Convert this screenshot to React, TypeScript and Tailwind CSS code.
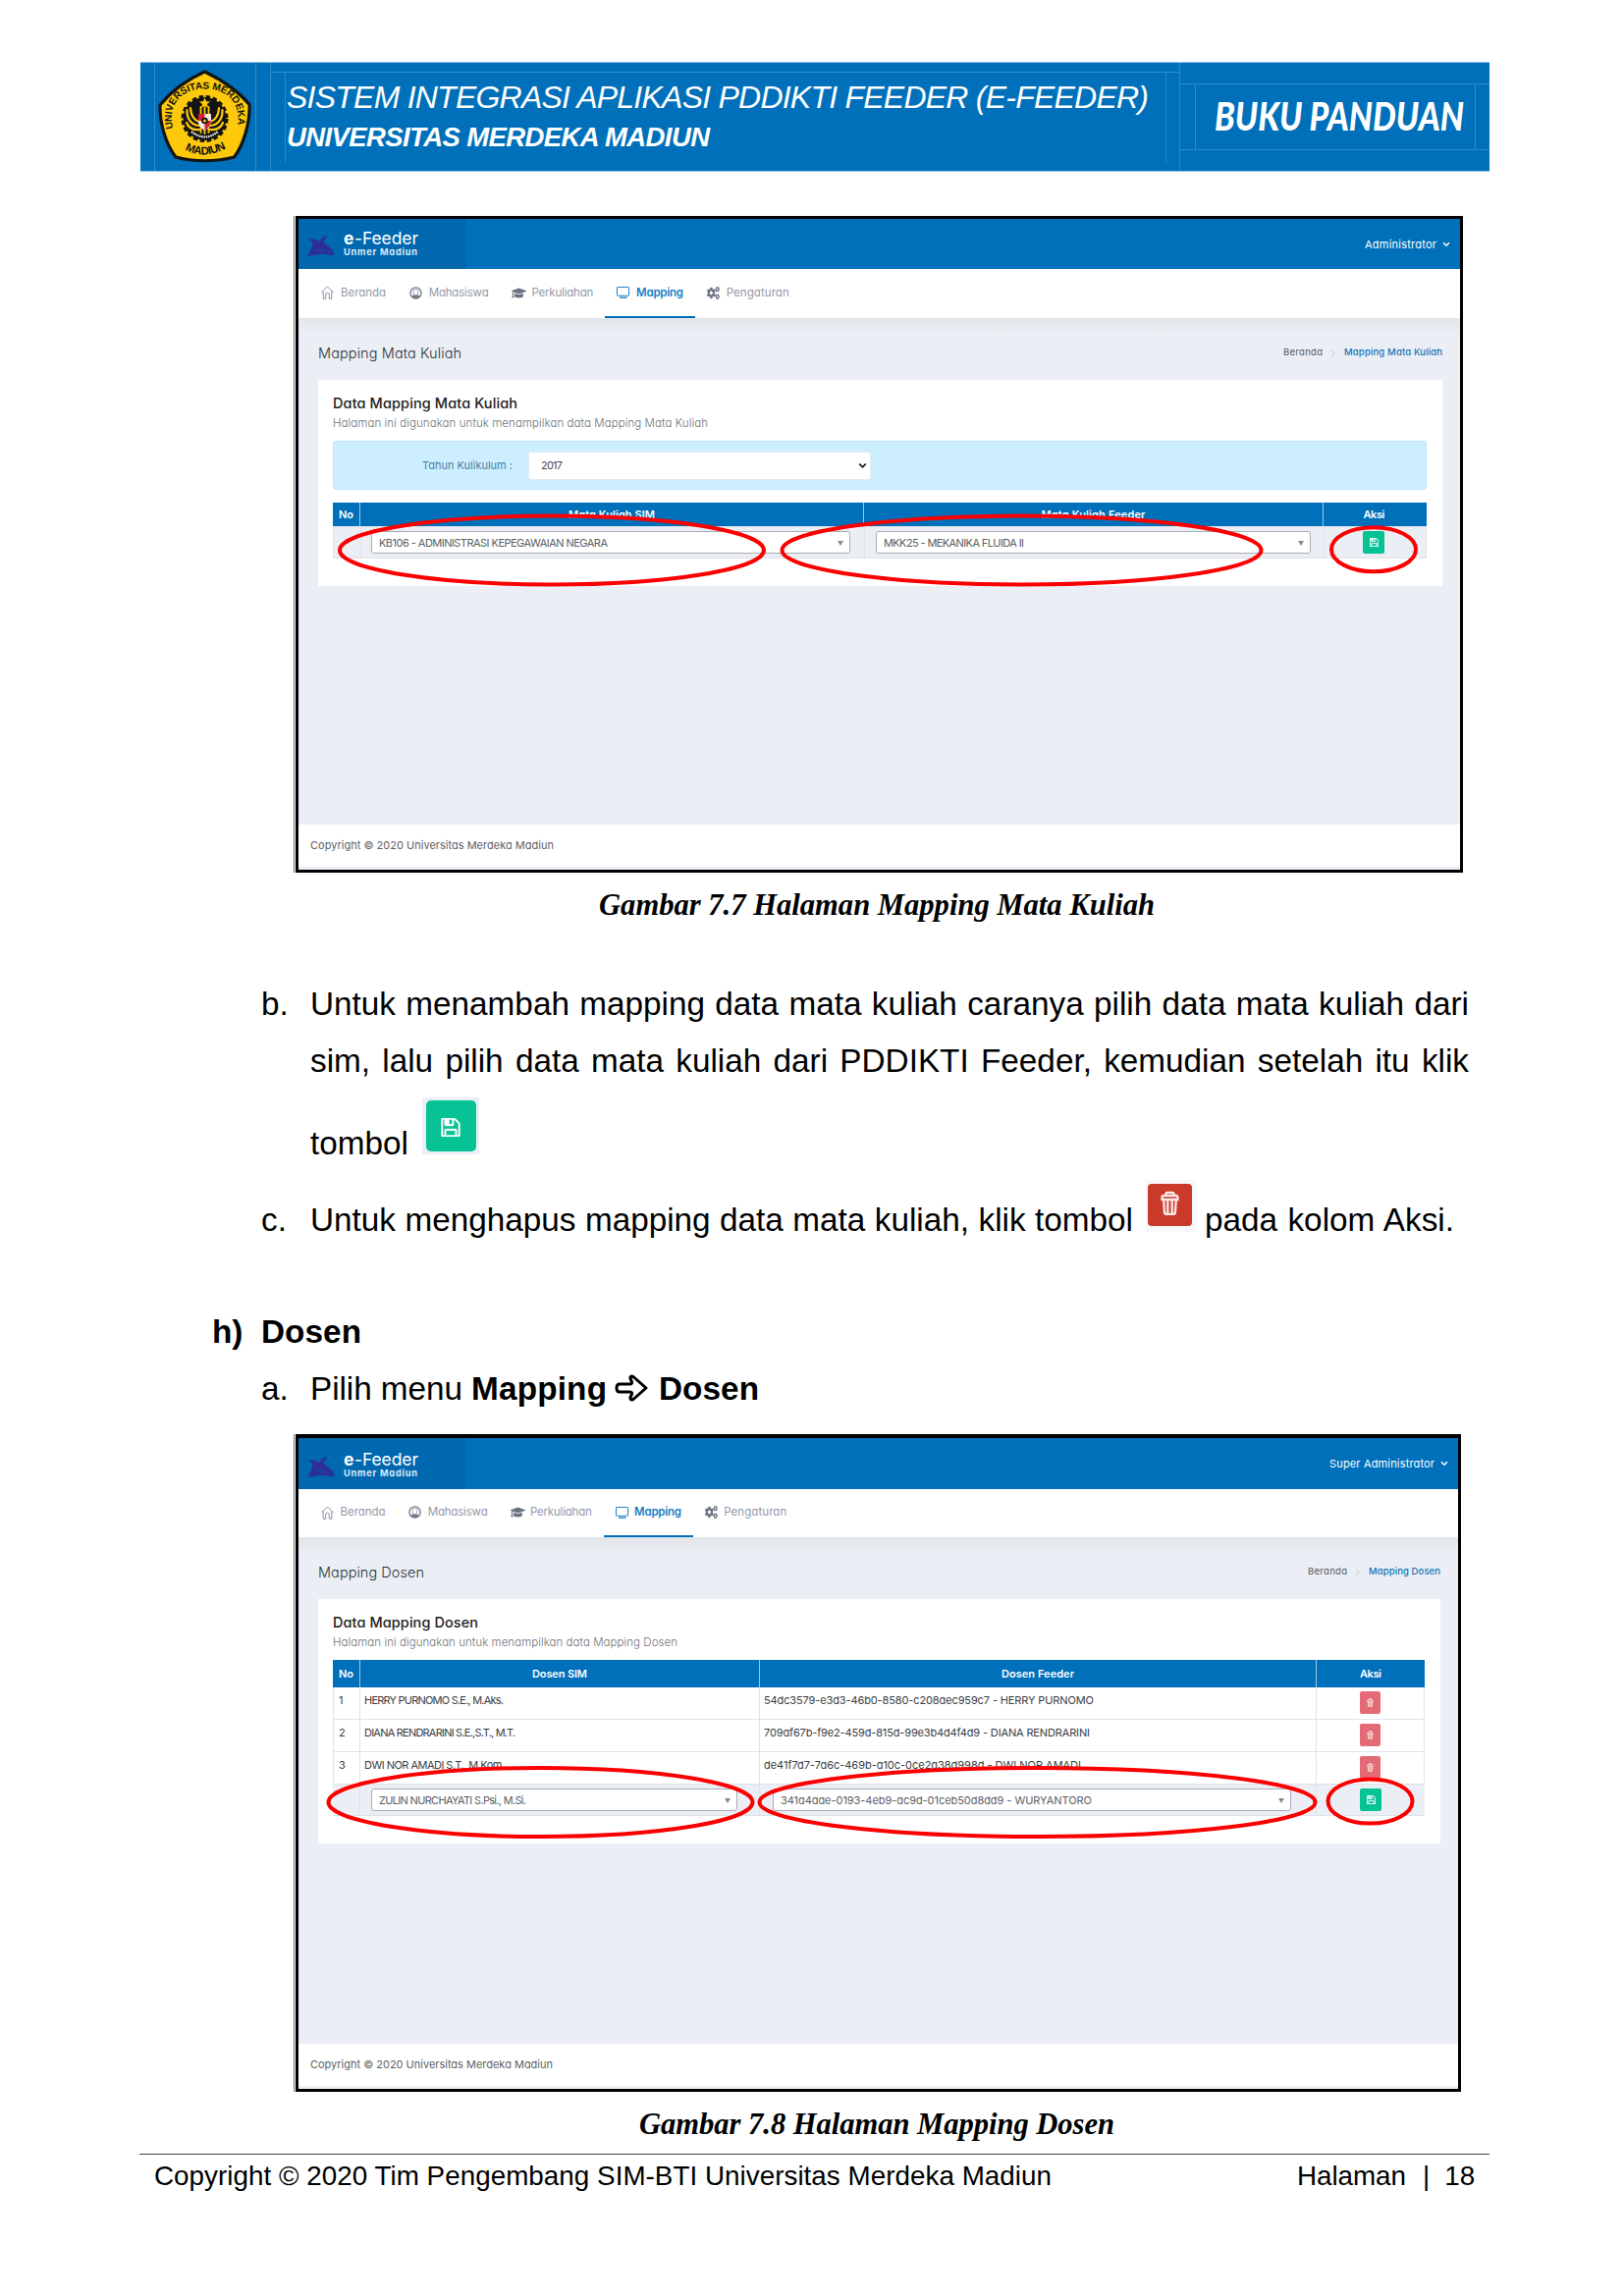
import React, { useLayoutEffect, useRef, useState } from "react";
import { FaCogs, FaGraduationCap } from "react-icons/fa";

type FitMode = "letter" | "word" | "scale";

/* One line of text, spaced out so that it fills exactly `w` pixels. */
function Fit({
  w,
  children,
  className = "",
  mode = "letter",
}: {
  w: number;
  children: string;
  className?: string;
  mode?: FitMode;
}) {
  const ref = useRef<HTMLSpanElement>(null);
  const [style, setStyle] = useState<React.CSSProperties>({});
  useLayoutEffect(() => {
    const natural = ref.current!.getBoundingClientRect().width || w;
    if (mode === "scale") {
      setStyle({ transform: `scaleX(${w / natural})`, transformOrigin: "left" });
    } else if (mode === "word") {
      const spaces = children.split(" ").length - 1;
      setStyle({ wordSpacing: spaces ? (w - natural) / spaces : 0 });
    } else {
      setStyle({ letterSpacing: (w - natural) / Math.max(1, children.length - 1) });
    }
  }, []);
  return (
    <span className={`block shrink-0 whitespace-nowrap ${className}`} style={{ width: w }}>
      <span ref={ref} className="inline-block whitespace-pre" style={style}>
        {children}
      </span>
    </span>
  );
}

function Emblem() {
  return (
    <svg viewBox="0 0 95 95" className="block h-[95px] w-[95px]">
      <defs>
        <path id="arcTopText" d="M15.500 60 C8 33 27 19.500 47.500 19.500 C68 19.500 87 33 80 60" />
        <path id="arcBottomText" d="M26.500 81 Q47 93 71 79" />
      </defs>
      <path
        d="M47.500 2 C62 9 80 20 93 35.500 C94 55 86 78 77.500 89 C60 94 35 94 18 89 C8 76 1.500 55 2 36 C15 20 32 9 47.500 2Z"
        fill="#fdc90a"
        stroke="#141414"
        strokeWidth="3.200"
        strokeLinejoin="round"
      />
      <circle cx="47.500" cy="50" r="22" fill="#141414" />
      <circle cx="47.500" cy="50" r="22.500" fill="none" stroke="#141414" strokeWidth="3" strokeDasharray="4.500 2.600" />
      <path d="M47.500 28.500l1.600 3.800 4 .2-3.100 2.600 1.100 4-3.600-2.300-3.600 2.300 1.100-4-3.100-2.600 4-.2z" fill="#fdc90a" />
      <g stroke="#fdc90a" fill="none" strokeWidth="2.200" strokeLinecap="round">
        <path d="M43 57C35 57 29 51 29.500 41" />
        <path d="M43 53C37 52 33.500 47 33 39" />
        <path d="M52 57C60 57 66 51 65.500 41" />
        <path d="M52 53C58 52 61.500 47 62 39" />
        <path d="M43 61C36 62 31 59 29 54" />
        <path d="M52 61C59 62 64 59 66 54" />
        <path d="M43.500 38v26M47.500 38v27M51.500 38v26" strokeWidth="1.800" />
      </g>
      <path d="M41 45h13v9q-1 5-6.500 8q-5.500-3-6.500-8z" fill="#f2e9e2" />
      <path d="M41 45h6.500v7H41zM47.500 52H54q-.5 6-6.500 10z" fill="#d9232e" />
      <circle cx="47.500" cy="52" r="3.300" fill="#141414" />
      <circle cx="47.500" cy="52" r="1.500" fill="#fdc90a" />
      <path d="M34 63Q47.500 74 61 63" stroke="#f5f5f5" strokeWidth="2.200" fill="none" strokeDasharray="1.500 .8" />
      <text className="font-['Liberation_Sans'] font-bold" fontSize="10.200" fill="#141414">
        <textPath href="#arcTopText" textLength="119" startOffset="0">
          UNIVERSITAS MERDEKA
        </textPath>
      </text>
      <text className="font-['Liberation_Sans'] font-bold" fontSize="11.500" fill="#141414">
        <textPath href="#arcBottomText" textLength="44" startOffset="1">
          MADIUN
        </textPath>
      </text>
    </svg>
  );
}

function PageHeader() {
  return (
    <header className="mt-[63px] ml-[143px] flex h-[112px] w-[1374px] shrink-0 border-y border-[#8dbfe2] bg-[#0070ba] text-white">
      <div className="w-[132px] pl-[14px]">
        <div className="h-full w-[104px] border-x border-[#2f8ccb] pt-[7px] pl-[3px]">
          <Emblem />
        </div>
      </div>
      <div className="w-[926px] border-l border-[#2f8ccb] pt-[9px]">
        <div className="border-t border-[#2f8ccb] pl-[14px]">
          <div className="flex h-[91px] w-[898px] flex-col border-x border-[#2f8ccb] pl-[1px] font-['Liberation_Sans',sans-serif] italic">
            <Fit w={878} className="mt-[7px] text-[32px] leading-[36px]">
              SISTEM INTEGRASI APLIKASI PDDIKTI FEEDER (E-FEEDER)
            </Fit>
            <Fit w={431} className="mt-[7px] text-[27.500px] leading-[32px] font-bold">
              UNIVERSITAS MERDEKA MADIUN
            </Fit>
          </div>
        </div>
      </div>
      <div className="flex-1 border-l border-[#2f8ccb] pt-[21px]">
        <div className="flex h-[68px] justify-center border-y border-[#2f8ccb]">
          <div className="flex w-[286px] items-center border-x border-[#2f8ccb] pl-[19px]">
            <Fit w={254} mode="scale" className="-mt-[2px] font-['Lato',sans-serif] text-[40px] leading-[44px] font-black italic">
              BUKU PANDUAN
            </Fit>
          </div>
        </div>
      </div>
    </header>
  );
}

function BirdLogo() {
  return (
    <svg viewBox="0 0 30 24" className="mt-[2px] block h-[24px] w-[30px] shrink-0">
      <path
        d="M2 5l6.500 1 3.500 2L15.500 3.500 20 2l-1.500 3.500-2.500 3 5 4 5 3.500 1.500 6.500-5.500-.8-6-.7-6 .2L0 23l2-3.200L4.500 14 5.500 10z"
        fill="#2b2f96"
      />
      <path d="M9 16q4 2.500 8 .3M19.500 17.500l2 2.200M22.500 15.800l1.500 3" stroke="#0a62a8" strokeWidth=".9" fill="none" />
      <path d="M22 1q8 3 5 10q-1 3-4 4" stroke="#0a79c6" strokeWidth=".8" fill="none" />
    </svg>
  );
}

function HomeIcon() {
  return (
    <svg viewBox="0 0 13 14" className="h-[14px] w-[13px]" fill="none" stroke="#8a90a0" strokeWidth="1">
      <path d="M.5 7L6.500 1l6 6M2.200 5.500v7.800h2.500V9q0-1.800 1.800-1.800T8.300 9v4.300h2.500V5.500" />
    </svg>
  );
}

function UserIcon() {
  return (
    <svg viewBox="0 0 13 13" className="h-[13px] w-[13px]">
      <circle cx="6.500" cy="6.500" r="5.600" fill="none" stroke="#727887" strokeWidth="1.300" />
      <path d="M2 9.800Q4 8.300 6.500 8.300T11 9.800Q9.500 12.300 6.500 12.300T2 9.800z" fill="#727887" />
      <ellipse cx="6.500" cy="5.600" rx="2.700" ry="3.200" fill="#fff" stroke="#727887" strokeWidth=".7" />
    </svg>
  );
}

function MonitorIcon() {
  return (
    <svg viewBox="0 0 13 12" className="h-[12px] w-[13px]" fill="none" stroke="#1a7fc4" strokeWidth="1">
      <rect x=".5" y=".5" width="12" height="8.800" rx=".6" />
      <path d="M3 11.200h7.500" strokeWidth="1.300" />
    </svg>
  );
}

function SaveIcon({ className }: { className: string }) {
  return (
    <svg viewBox="0 128 1536 1536" className={className} fill="#fff" stroke="#fff" strokeWidth="30">
      <path d="M384 1536h768v-384H384v384zm896 0h128V640q0-14-10-38.500t-20-34.500l-281-281q-10-10-34-20t-39-10v416q0 40-28 68t-68 28H352q-40 0-68-28t-28-68V256H128v1280h128v-416q0-40 28-68t68-28h832q40 0 68 28t28 68v416zM896 608V288q0-13-9.500-22.500T864 256H672q-13 0-22.500 9.500T640 288v320q0 13 9.500 22.500T672 640h192q13 0 22.500-9.500T896 608zm640 32v928q0 40-28 68t-68 28H96q-40 0-68-28t-28-68V224q0-40 28-68t68-28h928q40 0 88 20t76 48l280 280q28 28 48 76t20 88z" />
    </svg>
  );
}

function TrashIcon({ className }: { className: string }) {
  return (
    <svg viewBox="0 0 19 25" className={className} fill="none" stroke="#fbe9e7" strokeWidth="2.300">
      <path d="M5.500 4.500V3.300q0-1.500 1.500-1.500h5q1.500 0 1.500 1.500v1.200M1.500 9V7q0-2 2-2h12q2 0 2 2v2zM3.200 9l.8 13q.2 1.800 2 1.800h7q1.800 0 2-1.800l.8-13M7.300 9v14M11.700 9v14" />
    </svg>
  );
}

function Chevron({ className }: { className: string }) {
  return (
    <svg viewBox="0 0 8 6" className={className} fill="none" stroke="currentColor" strokeWidth="1.500">
      <path d="M1 1.200l3 3 3-3" />
    </svg>
  );
}

const NAV = [
  { label: "Beranda", w: 46, icon: <HomeIcon /> },
  { label: "Mahasiswa", w: 61, icon: <UserIcon /> },
  { label: "Perkuliahan", w: 63, icon: <FaGraduationCap preserveAspectRatio="none" className="h-[13px] w-[15px]" color="#6c7282" /> },
  { label: "Mapping", w: 48, icon: <MonitorIcon />, active: true },
  { label: "Pengaturan", w: 64, icon: <FaCogs preserveAspectRatio="none" className="h-[13px] w-[13px]" color="#6c7282" /> },
];

function Select2({ text, w, className }: { text: string; w: number; className: string }) {
  return (
    <div className={`flex h-[23px] items-center rounded-[3px] border border-[#aaadb2] bg-white pt-[1px] pl-[7px] text-[11px] text-[#5b5e63] ${className}`}>
      <Fit w={w}>{text}</Fit>
      <svg viewBox="0 0 6 5" className="mr-[6px] ml-auto h-[5px] w-[6px]">
        <path d="M0 0h6L3 5z" fill="#888" />
      </svg>
    </div>
  );
}

function SaveButton() {
  return (
    <div className="flex h-[23px] w-[22px] items-center justify-center rounded-[2px] bg-[#06c295]">
      <SaveIcon className="h-[9px] w-[9px]" />
    </div>
  );
}

function AppFrame(p: {
  height: string;
  topBorder: string;
  bar: string;
  brand: string;
  nav: string;
  slot: string;
  cardHeight: string;
  user: string;
  userW: number;
  title: string;
  titleW: number;
  crumbBerandaW: number;
  crumbW: number;
  subtitle: string;
  cardTitleW: number;
  subtitleW: number;
  footerW: number;
  overlay: React.ReactNode;
  children: React.ReactNode;
}) {
  return (
    <section className={`ml-[299px] flex w-[1189px] shrink-0 border-l border-[#777] pl-px font-['Inter',sans-serif] [font-feature-settings:'cv11'] ${p.height}`}>
      <div className={`relative flex flex-1 flex-col border-x-[3px] border-b-[3px] border-black bg-[#ebeff5] ${p.topBorder}`}>
        <div className={`flex shrink-0 items-center bg-[#0070ba] text-white ${p.bar}`}>
          <div className={`flex h-full w-[171px] items-center bg-[#0068af] pl-[9px] ${p.brand}`}>
            <BirdLogo />
            <div className="ml-[7px] flex flex-col">
              <div className="flex h-[16px] text-[17.500px] leading-[16px]">
                <Fit w={11} className="font-bold">e</Fit>
                <Fit w={65}>-Feeder</Fit>
              </div>
              <Fit w={75} className="text-[9.200px] leading-[12px] font-bold text-[#dcebf7]">Unmer Madiun</Fit>
            </div>
          </div>
          <Fit w={p.userW} className="mt-[1px] ml-auto text-[11px]">{p.user}</Fit>
          <Chevron className="mr-[10px] ml-[6px] h-[6px] w-[8px]" />
        </div>
        <nav className={`flex shrink-0 gap-[23.700px] bg-white pl-[23px] text-[11.500px] text-[#9499a8] ${p.nav}`}>
          {NAV.map((n) => (
            <div key={n.label} className="relative flex items-center">
              <span className={`flex shrink-0 pb-[2px] ${p.slot}`}>{n.icon}</span>
              <Fit w={n.w} className={n.active ? "pb-[1.500px] font-semibold text-[#1a7fc4]" : "pb-[1.500px]"}>{n.label}</Fit>
              {n.active && <span className="absolute -right-[12px] bottom-0 -left-[12px] h-[2.500px] bg-[#0070ba]" />}
            </div>
          ))}
        </nav>
        <div className="flex h-[63px] shrink-0 items-center bg-linear-to-b from-[#e2e6eb] to-[#ebeff5] to-25% pt-[8px] pr-[18px] pl-[20px]">
          <Fit w={p.titleW} className="text-[14.500px] font-light text-[#2d3238]">{p.title}</Fit>
          <Fit w={p.crumbBerandaW} className="ml-auto text-[9.500px] text-[#555]">Beranda</Fit>
          <Chevron className="mx-[7px] h-[6px] w-[8px] -rotate-90 text-[#d3d8df]" />
          <Fit w={p.crumbW} className="text-[9.500px] font-medium text-[#1273b8]">{p.title}</Fit>
        </div>
        <div className={`mr-[18px] ml-[20px] shrink-0 bg-white pt-[14px] pr-[16px] pl-[15px] ${p.cardHeight}`}>
          <Fit w={p.cardTitleW} className="text-[14.500px] leading-[20px] font-medium text-[#222]">{"Data " + p.title}</Fit>
          <Fit w={p.subtitleW} className="text-[11.500px] leading-[21px] font-light text-[#6f7378]">{p.subtitle}</Fit>
          {p.children}
        </div>
        <footer className="mt-auto mb-[3px] flex h-[43px] shrink-0 items-center bg-white pl-[12px]">
          <Fit w={p.footerW} className="text-[11px] text-[#5e6166]">Copyright © 2020 Universitas Merdeka Madiun</Fit>
        </footer>
        {p.overlay}
      </div>
    </section>
  );
}

function HeadRow({ cols, labels, className }: { cols: string; labels: [string, number][]; className: string }) {
  return (
    <div className={`grid bg-[#0070ba] text-[11px] font-semibold text-white ${cols} ${className}`}>
      {labels.map(([t, w], i) => (
        <div key={t} className={i ? "flex items-center justify-center border-l border-[#9cc6e4]" : "flex items-center justify-center"}>
          <Fit w={w}>{t}</Fit>
        </div>
      ))}
    </div>
  );
}

const DOSEN: { name: string; nw: number; id: string; iw: number }[] = [
  { name: "HERRY PURNOMO S.E., M.Aks.", nw: 142, id: "54dc3579-e3d3-46b0-8580-c208aec959c7 - HERRY PURNOMO", iw: 336 },
  { name: "DIANA RENDRARINI S.E.,S.T., M.T.", nw: 154, id: "709af67b-f9e2-459d-815d-99e3b4d4f4d9 - DIANA RENDRARINI", iw: 332 },
  { name: "DWI NOR AMADI S.T., M.Kom.", nw: 143, id: "de41f7d7-7a6c-469b-a10c-0ce2a38d998d - DWI NOR AMADI", iw: 323 },
];

function MataKuliahFrame() {
  const cols = "grid-cols-[27px_513px_468px_104px]";
  return (
    <AppFrame
      height="mt-[45px] h-[669px]"
      topBorder="border-t-[3px]"
      bar="h-[51px]"
      brand="pt-[1px]"
      nav="h-[50px]"
      slot="w-[20px]"
      cardHeight="h-[210px]"
      user="Administrator"
      userW={73}
      title="Mapping Mata Kuliah"
      titleW={146}
      crumbBerandaW={40}
      crumbW={100}
      cardTitleW={188}
      subtitle="Halaman ini digunakan untuk menampilkan data Mapping Mata Kuliah"
      subtitleW={382}
      footerW={248}
      overlay={
        <svg viewBox="304 223 1181 663" className="absolute inset-0 h-full w-full" fill="none" stroke="#fb0000" strokeWidth="4">
          <ellipse cx="561" cy="560.500" rx="216" ry="35" />
          <ellipse cx="1039.500" cy="560.500" rx="244" ry="35" />
          <ellipse cx="1398" cy="559.700" rx="43" ry="22.500" />
        </svg>
      }
    >
      <div className="mt-[7px] flex h-[50px] items-center rounded-[3px] border border-[#b9e7fb] bg-[#cceeff] pl-[90px]">
        <Fit w={92} className="text-[11px] text-[#4c7f9f]">Tahun Kulikulum :</Fit>
        <div className="ml-[16px] flex h-[29px] w-[349px] items-center rounded-[3px] border border-[#e3ebf1] bg-white pr-[3px] pl-[12px] text-[#4a4d52]">
          <Fit w={22} className="text-[11px]">2017</Fit>
          <Chevron className="ml-auto h-[7px] w-[9px] text-[#111]" />
        </div>
      </div>
      <HeadRow cols={cols} className="mt-[13px] h-[24px]" labels={[["No", 15], ["Mata Kuliah SIM", 88], ["Mata Kuliah Feeder", 106], ["Aksi", 22]]} />
      <div className={`grid h-[33px] border border-[#dfe3e8] bg-[#ebeff5] ${cols}`}>
        <div />
        <div className="border-l border-[#dfe3e8] pt-[4px] pl-[10px]">
          <Select2 className="w-[488px]" w={233} text="KB106 - ADMINISTRASI KEPEGAWAIAN NEGARA" />
        </div>
        <div className="border-l border-[#dfe3e8] pt-[4px] pl-[11px]">
          <Select2 className="w-[443px]" w={143} text="MKK25 - MEKANIKA FLUIDA II" />
        </div>
        <div className="flex justify-center border-l border-[#dfe3e8] pt-[4px] pr-[3px]">
          <SaveButton />
        </div>
      </div>
    </AppFrame>
  );
}

function DosenFrame() {
  const cols = "grid-cols-[27px_407px_567px_111px]";
  return (
    <AppFrame
      height="mt-[18px] h-[670px]"
      topBorder="border-t-[4px]"
      bar="h-[52px]"
      brand="pt-[4px]"
      nav="h-[49px]"
      slot="w-[19.500px]"
      cardHeight="h-[249px]"
      user="Super Administrator"
      userW={107}
      title="Mapping Dosen"
      titleW={108}
      crumbBerandaW={40}
      crumbW={73}
      cardTitleW={148}
      subtitle="Halaman ini digunakan untuk menampilkan data Mapping Dosen"
      subtitleW={351}
      footerW={247}
      overlay={
        <svg viewBox="304 1465 1181 663" className="absolute inset-0 h-full w-full" fill="none" stroke="#fb0000" strokeWidth="4">
          <ellipse cx="550.500" cy="1836" rx="216" ry="35" />
          <ellipse cx="1056.500" cy="1836" rx="283" ry="35" />
          <ellipse cx="1395.500" cy="1835" rx="43" ry="22.500" />
        </svg>
      }
    >
      <HeadRow cols={cols} className="mt-[7px] h-[28px]" labels={[["No", 15], ["Dosen SIM", 56], ["Dosen Feeder", 74], ["Aksi", 22]]} />
      {DOSEN.map((d, i) => (
        <div key={d.id} className={`grid h-[33px] border-b border-[#dfe3e8] text-[11px] leading-[16px] text-[#3a3d42] ${cols}`}>
          <div className="border-l border-[#dfe3e8] pt-[5px] pl-[5px]">{i + 1}</div>
          <div className="border-l border-[#dfe3e8] pt-[5px] pl-[4px]"><Fit w={d.nw}>{d.name}</Fit></div>
          <div className="border-l border-[#dfe3e8] pt-[5px] pl-[4px]"><Fit w={d.iw}>{d.id}</Fit></div>
          <div className="flex justify-center border-x border-[#dfe3e8] pt-[4px]">
            <div className="flex h-[23px] w-[21px] items-center justify-center rounded-[2px] bg-[#e46a76]">
              <TrashIcon className="h-[9px] w-[7px]" />
            </div>
          </div>
        </div>
      ))}
      <div className={`grid h-[32px] border-b border-[#dfe3e8] bg-[#ebeff5] ${cols}`}>
        <div />
        <div className="border-l border-[#dfe3e8] pt-[4px] pl-[11px]">
          <Select2 className="w-[373px]" w={150} text="ZULIN NURCHAYATI S.Psi., M.Si." />
        </div>
        <div className="border-l border-[#dfe3e8] pt-[4px] pl-[13px]">
          <Select2 className="w-[528px]" w={317} text="341a4aae-0193-4eb9-ac9d-01ceb50d8dd9 - WURYANTORO" />
        </div>
        <div className="flex justify-center border-l border-[#dfe3e8] pt-[4px]">
          <SaveButton />
        </div>
      </div>
    </AppFrame>
  );
}

export default function App() {
  return (
    <div className="flex h-[2339px] w-[1654px] flex-col overflow-hidden bg-white text-black">
      <PageHeader />
      <MataKuliahFrame />
      <Fit w={566} className="mt-[16px] ml-[610px] font-['Liberation_Serif',serif] text-[30.600px] leading-[34px] font-bold italic">
        Gambar 7.7 Halaman Mapping Mata Kuliah
      </Fit>

      <div className="mt-[55px] shrink-0 font-['Liberation_Sans',sans-serif] text-[33.300px] leading-[57.500px]">
        <div className="flex h-[198px]">
          <div className="w-[50px] ml-[266px]">b.</div>
          <div>
            <Fit w={1180} mode="word">Untuk menambah mapping data mata kuliah caranya pilih data mata kuliah dari</Fit>
            <Fit w={1180} mode="word">sim, lalu pilih data mata kuliah dari PDDIKTI Feeder, kemudian setelah itu klik</Fit>
            <div className="flex">
              <Fit w={100} className="mt-[26.500px]">tombol</Fit>
              <div className="mt-[9px] ml-[14px] h-[58px] w-[58px] bg-[#ebeff5] pt-[3px] pl-[4px]">
                <div className="h-[52px] w-[51px] rounded-[5px] bg-[#06c295] pt-[18px] pl-[15px]">
                  <SaveIcon className="block h-[19px] w-[20px]" />
                </div>
              </div>
            </div>
          </div>
        </div>
        <div className="flex h-[136px]">
          <div className="mt-[22px] ml-[266px] w-[50px]">c.</div>
          <Fit w={838} mode="word" className="mt-[22px]">Untuk menghapus mapping data mata kuliah, klik tombol</Fit>
          <div className="mt-[10px] ml-[13px] h-[53px] w-[51px] bg-[#f8f8f8] pt-[4px] pl-[2px]">
            <div className="h-[43px] w-[45px] rounded-[4px] bg-[#c93a2b] pt-[7px] pl-[13px]">
              <TrashIcon className="block h-[25px] w-[19px]" />
            </div>
          </div>
          <Fit w={254} mode="word" className="mt-[22px] ml-[9px]">pada kolom Aksi.</Fit>
        </div>
        <div className="flex h-[57.500px] font-bold">
          <div className="ml-[216px] w-[50px]">h)</div>
          <Fit w={102}>Dosen</Fit>
        </div>
        <div className="flex h-[57.500px]">
          <div className="ml-[266px] w-[50px]">a.</div>
          <Fit w={155}>Pilih menu</Fit>
          <Fit w={138} className="ml-[9px] font-bold">Mapping</Fit>
          <svg viewBox="0 0 34 28" className="mt-[14px] ml-[8px] h-[28px] w-[34px]" fill="none" stroke="#000" strokeWidth="3" strokeLinejoin="round">
            <path d="M5 10H15.500Q18.500 10 17.200 7L16 4.500Q15.500 1 19 2.500L32 14L19 25.500Q15.500 27 16 23.500L17.200 21Q18.500 18 15.500 18H5Q2 18 2 14T5 10z" />
          </svg>
          <Fit w={102} className="ml-[11px] font-bold">Dosen</Fit>
        </div>
      </div>

      <DosenFrame />
      <Fit w={484} className="mt-[16px] ml-[651px] font-['Liberation_Serif',serif] text-[30.600px] leading-[34px] font-bold italic">
        Gambar 7.8 Halaman Mapping Dosen
      </Fit>
      <footer className="mt-[13px] ml-[142px] flex w-[1375px] shrink-0 border-t-[1.500px] border-[#444] pt-[6px] pl-[15px] font-['Liberation_Sans',sans-serif] text-[27.800px] leading-[32px]">
        <Fit w={914}>Copyright © 2020 Tim Pengembang SIM-BTI Universitas Merdeka Madiun</Fit>
        <Fit w={111} className="ml-[250px]">Halaman</Fit>
        <span className="ml-[17px]">|</span>
        <Fit w={31} className="ml-[15px]">18</Fit>
      </footer>
    </div>
  );
}
